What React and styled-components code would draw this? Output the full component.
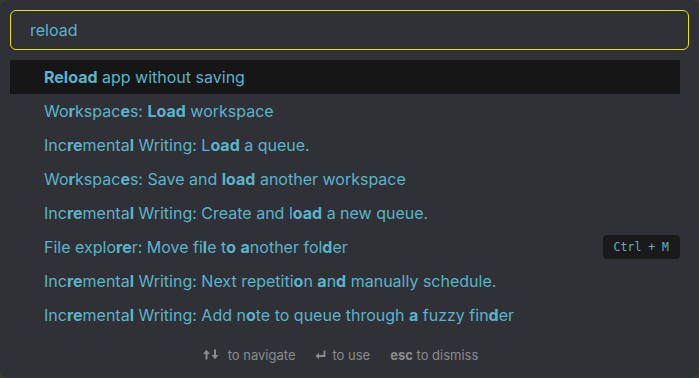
import styled, { createGlobalStyle } from "styled-components";

const Global = createGlobalStyle`
  html, body {
    margin: 0;
    padding: 0;
    background: #3a3a30;
  }
  body {
    font-family: Inter, "Noto Sans", sans-serif;
  }
`;

const Modal = styled.div`
  width: 699px;
  height: 378px;
  box-sizing: border-box;
  background: #303136;
  border-radius: 8px;
  padding: 10px 10px 0 10px;
  display: flex;
  flex-direction: column;
`;

const SearchBox = styled.div`
  height: 40px;
  box-sizing: border-box;
  border: 1px solid #e8e600;
  border-radius: 6px;
  display: flex;
  align-items: center;
  padding: 0 19px;
  font-size: 16px;
  color: #5ab4ca;
`;

const List = styled.div`
  margin-top: 10px;
  padding-right: 9px;
  display: flex;
  flex-direction: column;
`;

const Row = styled.div`
  height: 34px;
  display: flex;
  align-items: center;
  justify-content: space-between;
  padding-left: 34px;
  font-size: 16px;
  color: #5ab4ca;
  background: ${(p) => (p.$active ? "#161616" : "transparent")};
  white-space: pre;

  b {
    font-weight: 700;
  }
`;

const Kbd = styled.span`
  background: #1a1a1b;
  border-radius: 4px;
  padding: 5px 11px;
  font-family: "DejaVu Sans Mono", monospace;
  font-size: 11.5px;
  color: #5ab4ca;
`;

const Footer = styled.div`
  flex: 1;
  display: flex;
  align-items: center;
  justify-content: center;
  gap: 20px;
  font-size: 13px;
  color: #8a8b8e;
  padding: 0 18px 1px 0;
`;

const Hint = styled.span`
  display: inline-flex;
  align-items: center;
  white-space: pre;

  b {
    font-weight: 700;
  }
`;

const Icon = styled.svg`
  margin-right: ${(p) => p.$gap || 6}px;
`;

export default function App() {
  const rows = [
    [["b", "Reload"], ["", " app without saving"]],
    [["", "Wo"], ["b", "r"], ["", "kspac"], ["b", "e"], ["", "s: "], ["b", "Load"], ["", " workspace"]],
    [["", "Inc"], ["b", "re"], ["", "menta"], ["b", "l"], ["", " Writing: L"], ["b", "oad"], ["", " a queue."]],
    [["", "Wo"], ["b", "r"], ["", "kspac"], ["b", "e"], ["", "s: Save and "], ["b", "load"], ["", " another workspace"]],
    [["", "Inc"], ["b", "re"], ["", "menta"], ["b", "l"], ["", " Writing: Create and l"], ["b", "oad"], ["", " a new queue."]],
    [["", "File explo"], ["b", "re"], ["", "r: Move fi"], ["b", "l"], ["", "e t"], ["b", "o"], ["", " "], ["b", "a"], ["", "nother fol"], ["b", "d"], ["", "er"]],
    [["", "Inc"], ["b", "re"], ["", "menta"], ["b", "l"], ["", " Writing: Next repetiti"], ["b", "o"], ["", "n "], ["b", "a"], ["", "n"], ["b", "d"], ["", " manually schedule."]],
    [["", "Inc"], ["b", "re"], ["", "menta"], ["b", "l"], ["", " Writing: Add n"], ["b", "o"], ["", "te to queue through "], ["b", "a"], ["", " fuzzy fin"], ["b", "d"], ["", "er"]],
  ];

  return (
    <>
      <Global />
      <Modal>
        <SearchBox>reload</SearchBox>
        <List>
          {rows.map((parts, i) => (
            <Row key={i} $active={i === 0}>
              <span>
                {parts.map(([t, s], j) => (t === "b" ? <b key={j}>{s}</b> : <span key={j}>{s}</span>))}
              </span>
              {i === 5 && <Kbd>Ctrl + M</Kbd>}
            </Row>
          ))}
        </List>
        <Footer>
          <Hint>
            <Icon $gap={9} width="16" height="11" viewBox="0 0 16 11">
              <path d="M3.5 10.5V3" stroke="#8a8b8e" strokeWidth="2" />
              <path d="M0 5L3.5 0.8L7 5Z" fill="#8a8b8e" />
              <path d="M12 0.5V8" stroke="#8a8b8e" strokeWidth="2" />
              <path d="M8.5 6L12 10.2L15.5 6Z" fill="#8a8b8e" />
            </Icon>
            to navigate
          </Hint>
          <Hint>
            <Icon width="11" height="10" viewBox="0 0 11 10">
              <path d="M9.5 0.5v5.5H3" fill="none" stroke="#8a8b8e" strokeWidth="1.8" />
              <path d="M0.5 6L4 2.8V9.2Z" fill="#8a8b8e" />
            </Icon>
            to use
          </Hint>
          <Hint>
            <b>esc</b> to dismiss
          </Hint>
        </Footer>
      </Modal>
    </>
  );
}
